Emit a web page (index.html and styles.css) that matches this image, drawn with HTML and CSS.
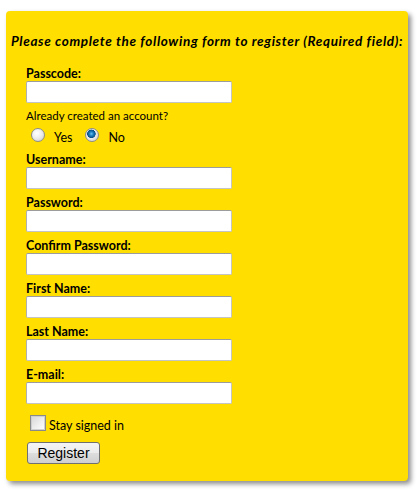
FILE: index.html
```html
<!DOCTYPE html>
<html>
<head>
<meta charset="utf-8">
<link rel="stylesheet" href="styles.css">
</head>
<body>
<form class="panel">
  <h2 class="title">Please complete the following form to register (Required field):</h2>
  <div class="fields">
    <label class="lbl">Passcode:</label>
    <input class="txt" type="text">
    <div class="question">Already created an account?</div>
    <div class="radios">
      <label class="opt"><input class="radio" type="radio" name="acc"><span class="opt-text">Yes</span></label>
      <label class="opt"><input class="radio" type="radio" name="acc" checked><span class="opt-text">No</span></label>
    </div>
    <label class="lbl">Username:</label>
    <input class="txt" type="text">
    <label class="lbl">Password:</label>
    <input class="txt" type="password">
    <label class="lbl">Confirm Password:</label>
    <input class="txt" type="password">
    <label class="lbl">First Name:</label>
    <input class="txt" type="text">
    <label class="lbl">Last Name:</label>
    <input class="txt" type="text">
    <label class="lbl">E-mail:</label>
    <input class="txt last" type="text">
    <label class="stay"><input class="check" type="checkbox"><span class="stay-text">Stay signed in</span></label>
    <button class="btn" type="button">Register</button>
  </div>
</form>
</body>
</html>
```
FILE: styles.css
```css
html, body {
  margin: 0;
  padding: 0;
  background: #ffffff;
}
body {
  padding: 11px 12px 10px 6px;
  font-family: Lato, "Open Sans", sans-serif;
  color: #000;
}
.panel {
  display: block;
  width: 402px;
  height: 470px;
  box-sizing: border-box;
  background: #ffde00;
  border-radius: 4px;
  box-shadow: 3px 3px 5px rgba(0, 0, 0, 0.45);
  padding: 22px 0 0 0;
}
.title {
  margin: 0;
  font-size: 13.5px;
  font-weight: bold;
  font-style: italic;
  letter-spacing: 0.65px;
  text-align: center;
  line-height: 16px;
  white-space: nowrap;
}
.fields {
  display: flex;
  flex-direction: column;
  align-items: flex-start;
  padding: 18px 0 0 20px;
}
.lbl {
  display: block;
  font-size: 12.5px;
  font-weight: bold;
  line-height: 14px;
}
.txt {
  display: block;
  width: 206px;
  height: 22px;
  box-sizing: border-box;
  margin: 0 0 7px 0;
  border: 1px solid #c4c4c4;
  border-top-color: #9c9c9c;
  border-left-color: #b0b0b0;
  border-radius: 2px;
  background: #fff;
  padding: 0 3px;
}
.question {
  font-size: 11.5px;
  line-height: 13px;
  margin-top: -1px;
}
.radios {
  display: flex;
  align-items: flex-start;
  height: 20px;
  padding-left: 5px;
  margin: 3px 0 8px 0;
}
.opt {
  display: flex;
  align-items: flex-start;
  font-size: 12.5px;
  line-height: 20px;
}
.opt + .opt {
  margin-left: 13px;
}
.opt-text {
  margin-left: 9px;
  padding-top: 3px;
}
.radio {
  -webkit-appearance: none;
  appearance: none;
  width: 14px;
  height: 14px;
  margin: 3px 0 0 0;
  border-radius: 50%;
  border: 1px solid #8c8c8c;
  background: radial-gradient(circle at 40% 35%, #ffffff 0%, #eeeeee 45%, #c8c8c8 100%);
  box-sizing: border-box;
}
.radio:checked {
  background:
    radial-gradient(circle at 45% 40%, #6ec3f2 0px, #1e7fbf 2px, #0a4f84 4px, rgba(0,0,0,0) 4.5px),
    radial-gradient(circle at 40% 35%, #ffffff 0%, #eeeeee 45%, #c8c8c8 100%);
}
.txt.last {
  margin-bottom: 11px;
}
.stay {
  display: flex;
  align-items: flex-start;
  font-size: 12.5px;
  line-height: 14px;
  margin-left: 4px;
}
.stay-text {
  margin-left: 3px;
  padding-top: 4px;
}
.check {
  -webkit-appearance: none;
  appearance: none;
  width: 16px;
  height: 16px;
  margin: 0;
  border: 1px solid #8a8a8a;
  box-sizing: border-box;
  background: linear-gradient(135deg, #d6d6d6 0%, #f0f0f0 60%, #ffffff 100%);
  box-shadow: inset 0 0 0 1px #cfcfcf;
}
.btn {
  margin: 9px 0 0 1px;
  width: 73px;
  height: 22px;
  padding: 0;
  font-family: "Liberation Sans", Arial, sans-serif;
  font-size: 14px;
  color: #000;
  border: 1px solid #707070;
  border-radius: 3px;
  background: linear-gradient(#f4f4f4 0%, #ebebeb 50%, #dddddd 51%, #cfcfcf 100%);
}
```
